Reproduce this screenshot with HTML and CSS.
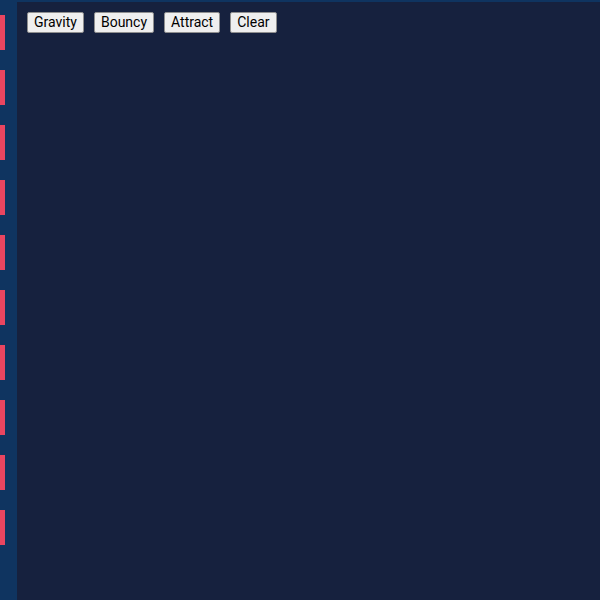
FILE: index.html
```html
<!DOCTYPE html>
<html>
<head>
<meta charset="utf-8">
<link rel="stylesheet" href="styles.css">
</head>
<body>
<div class="app">
  <div class="rail">
    <div class="mark"></div>
    <div class="mark"></div>
    <div class="mark"></div>
    <div class="mark"></div>
    <div class="mark"></div>
    <div class="mark"></div>
    <div class="mark"></div>
    <div class="mark"></div>
    <div class="mark"></div>
    <div class="mark"></div>
  </div>
  <div class="stage">
    <div class="toolbar">
      <button class="btn">Gravity</button>
      <button class="btn">Bouncy</button>
      <button class="btn">Attract</button>
      <button class="btn">Clear</button>
    </div>
  </div>
</div>
</body>
</html>
```

FILE: styles.css
```css
html, body {
  margin: 0;
  padding: 0;
  width: 600px;
  height: 600px;
  overflow: hidden;
  background: #0f3460;
  font-family: Roboto, "Liberation Sans", sans-serif;
}
.app {
  display: flex;
  height: 600px;
}
.rail {
  width: 17px;
  flex: none;
  display: flex;
  flex-direction: column;
  gap: 20px;
  padding-top: 15px;
}
.mark {
  width: 5px;
  height: 35px;
  background: #e94560;
}
.stage {
  flex: 1;
  margin-top: 2px;
  background: #16213e;
}
.toolbar {
  display: flex;
  gap: 10px;
  padding: 10px 0 0 10px;
}
.btn {
  height: 21px;
  padding: 0 6px;
  font-family: Roboto, "Liberation Sans", sans-serif;
  font-size: 14px;
  color: #000;
  background: #efefef;
  border: 1px solid #8f8f8f;
  border-radius: 2px;
  line-height: 19px;
}
```
